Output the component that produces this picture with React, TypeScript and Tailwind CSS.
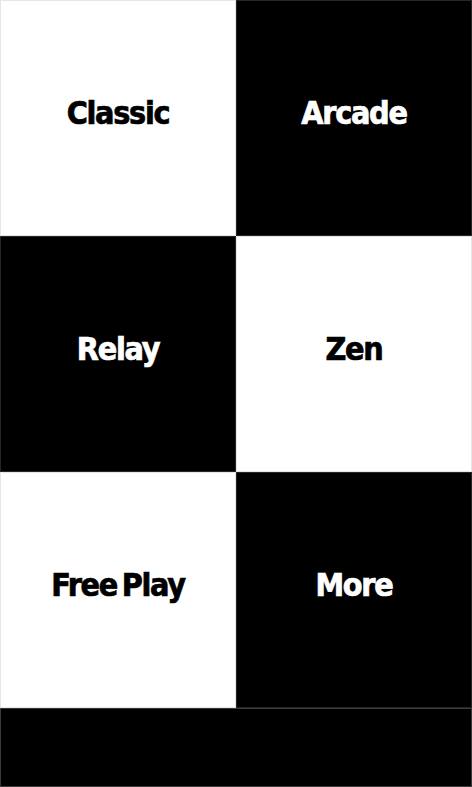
import React from "react";

const tiles = [
  { label: "Classic", dark: false },
  { label: "Arcade", dark: true },
  { label: "Relay", dark: true },
  { label: "Zen", dark: false },
  { label: "Free Play", dark: false },
  { label: "More", dark: true },
];

export default function App() {
  return (
    <div className="w-[472px] h-[787px] flex flex-col bg-black overflow-hidden">
      <div className="grid grid-cols-2 grid-rows-3 h-[708px]">
        {tiles.map((t) => (
          <div
            key={t.label}
            className={
              t.dark
                ? "flex items-center justify-center bg-black border border-[#262626] text-white"
                : "flex items-center justify-center bg-white border border-[#e6e6e6] text-black"
            }
          >
            <span
              className="text-[32px] font-bold leading-none pb-[10px] tracking-[-1.3px] [word-spacing:-4px] [-webkit-text-stroke:0.7px_currentColor]"
              style={{ fontFamily: '"DejaVu Sans Condensed", "DejaVu Sans", sans-serif' }}
            >
              {t.label}
            </span>
          </div>
        ))}
      </div>
      <div className="flex-1 bg-black border border-[#3a3a3a]" />
    </div>
  );
}
